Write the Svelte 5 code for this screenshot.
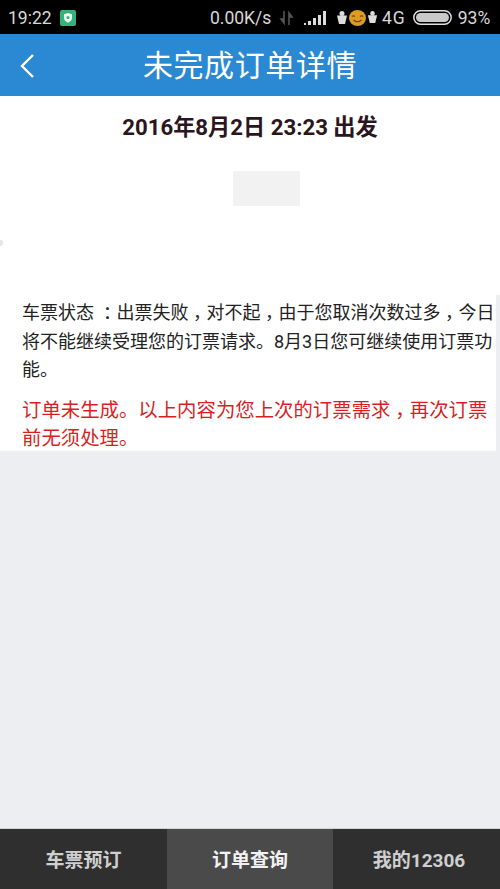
<script lang="ts">
  const tabs = [
    { label: '车票预订', active: false },
    { label: '订单查询', active: true },
    { label: '我的12306', active: false }
  ];
</script>

<div class="screen">
  <div class="status">
    <div class="status-left">
      <span class="time">19:22</span>
      <svg class="shield" width="16" height="16" viewBox="0 0 16 16">
        <rect width="16" height="16" rx="2" fill="#35b27c"/>
        <path d="M8 3l4 1.200v3.600c0 2.400-1.700 3.900-4 5-2.300-1.100-4-2.600-4-5V4.200z" fill="#e8f7f0"/>
        <circle cx="8" cy="7.500" r="1.500" fill="#35b27c"/>
      </svg>
    </div>
    <span class="speed">0.00K/s</span>
    <svg class="arrows" width="16" height="18" viewBox="0 0 16 18">
      <path d="M5 2v12M5 14l-3-4h3zM10 16V4M10 4l3 4h-3z" stroke="#555" stroke-width="1.600" fill="#555"/>
    </svg>
    <svg class="signal" width="23" height="16" viewBox="0 0 23 16">
      <rect x="0" y="13" width="2" height="2" fill="#ddd"/>
      <rect x="4" y="11" width="3" height="4" fill="#ddd"/>
      <rect x="9" y="8" width="3" height="7" fill="#ddd"/>
      <rect x="14" y="5" width="3" height="10" fill="#ddd"/>
      <rect x="19" y="1" width="3" height="14" fill="#ddd"/>
    </svg>
    <div class="emoji">
      <svg width="12" height="16" viewBox="0 0 12 16">
        <circle cx="6" cy="3.500" r="2.500" fill="#ddd"/>
        <path d="M1 5.500h10L9 14H3z" fill="#ddd"/>
      </svg>
      <svg class="face" width="19" height="17" viewBox="0 0 18 17">
        <ellipse cx="9" cy="9" rx="8.500" ry="8" fill="#dd9a25"/>
        <path d="M3.500 7.500q1.500-1.500 3 0M11.500 7.500q1.500-1.500 3 0M5 11q4 3.500 8 0" stroke="#6b4208" stroke-width="1.100" fill="none"/>
      </svg>
      <svg width="11" height="15" viewBox="0 0 12 16">
        <circle cx="6" cy="3.500" r="2.500" fill="#ddd"/>
        <path d="M1 5.500h10L9 14H3z" fill="#ddd"/>
      </svg>
    </div>
    <span class="net">4G</span>
    <svg class="battery" width="39" height="15" viewBox="0 0 39 15">
      <rect x="0.800" y="0.800" width="37.400" height="13.400" rx="6.700" fill="none" stroke="#e0e0e0" stroke-width="1.500"/>
      <rect x="3" y="3" width="33" height="9" rx="4.500" fill="#c9c9c9"/>
    </svg>
    <span class="pct">93%</span>
  </div>

  <header class="topbar">
    <svg class="back" width="16" height="26" viewBox="0 0 16 26">
      <path d="M14 2L3 13l11 11" fill="none" stroke="#fff" stroke-width="2.400"/>
    </svg>
    <h1>未完成订单详情</h1>
  </header>

  <main class="content">
    <section class="summary">
      <h2>2016年8月2日 23:23 出发</h2>
      <div class="placeholder"></div>
      <span class="edge-dot"></span>
    </section>
    <section class="notes">
      <p>车票状态 <span class="punct">：</span>出票失败<span class="punct">，</span>对不起<span class="punct">，</span>由于您取消次数过多<span class="punct">，</span>今日将不能继续受理您的订票请求。8月3日您可继续使用订票功能。</p>
      <p class="warn">订单未生成。以上内容为您上次的订票需求<span class="punct">，</span>再次订票前无须处理。</p>
    </section>
  </main>

  <nav class="tabs">
    {#each tabs as tab}
      <div class="tab" class:active={tab.active}>{tab.label}</div>
    {/each}
  </nav>
</div>

<style>
  :global(body) {
    margin: 0;
  }

  .screen {
    width: 500px;
    height: 889px;
    display: flex;
    flex-direction: column;
    overflow: hidden;
    background: #eceef1;
    font-family: Roboto, "Noto Sans CJK SC", sans-serif;
  }

  .status {
    height: 34px;
    flex: none;
    background: #000;
    color: #d8d8d8;
    font-size: 17.500px;
    display: flex;
    align-items: center;
    padding: 1px 9px 0 8px;
    box-sizing: border-box;
  }

  .status-left {
    width: 202px;
    display: flex;
    align-items: center;
    gap: 8px;
  }

  .speed {
    width: 69px;
  }

  .signal {
    margin-left: 9px;
  }

  .emoji {
    margin-left: 9px;
    display: flex;
    align-items: center;
  }

  .net {
    margin-left: 4px;
    letter-spacing: 1px;
  }

  .battery {
    margin-left: 7px;
  }

  .pct {
    margin-left: 6px;
  }

  .topbar {
    height: 62px;
    flex: none;
    background: #2a89d2;
    display: flex;
    align-items: center;
    justify-content: center;
    position: relative;
  }

  .back {
    position: absolute;
    left: 19px;
    top: 19px;
  }

  h1 {
    margin: 0 0 4px;
    color: #fff;
    font-size: 30px;
    font-weight: 400;
    letter-spacing: 0.600px;
  }

  .content {
    flex: 1;
  }

  .summary {
    height: 199px;
    background: #fff;
    position: relative;
    overflow: hidden;
  }

  .edge-dot {
    position: absolute;
    left: -2px;
    top: 144px;
    width: 5px;
    height: 6px;
    border-radius: 50%;
    background: #e6e6e6;
  }

  h2 {
    margin: 17px 0 0;
    height: 28px;
    line-height: 28px;
    text-align: center;
    color: #2a1520;
    font-size: 22.200px;
    font-weight: 700;
  }

  .placeholder {
    width: 67px;
    height: 35px;
    margin: 30px 0 0 233px;
    background: #f2f2f2;
  }

  .notes {
    width: 496px;
    height: 156px;
    box-sizing: border-box;
    padding: 4px 0 0 22px;
    background: #fff;
    font-size: 18px;
    line-height: 28.500px;
    color: #222;
  }

  .notes p {
    margin: 0;
  }

  .notes .warn {
    margin-top: 12px;
    font-size: 19.400px;
    color: #d81e1e;
  }

  /* commas and colon sit centred in their box on the device font */
  .punct {
    font-feature-settings: "halt";
    padding: 0 0.250em;
  }

  .tabs {
    height: 61px;
    flex: none;
    display: grid;
    grid-template-columns: 167px 166px 167px;
    background: #2f2f2f;
    border-top: 1px solid #d5d5d5;
    box-sizing: border-box;
  }

  .tab {
    display: flex;
    align-items: center;
    justify-content: center;
    padding-bottom: 2px;
    color: #cfcfcf;
    font-size: 19px;
    font-weight: 700;
  }

  .tab:last-child {
    padding-left: 5px;
  }

  .tab.active {
    background: #4a4a4a;
    color: #f2f2f2;
  }
</style>
